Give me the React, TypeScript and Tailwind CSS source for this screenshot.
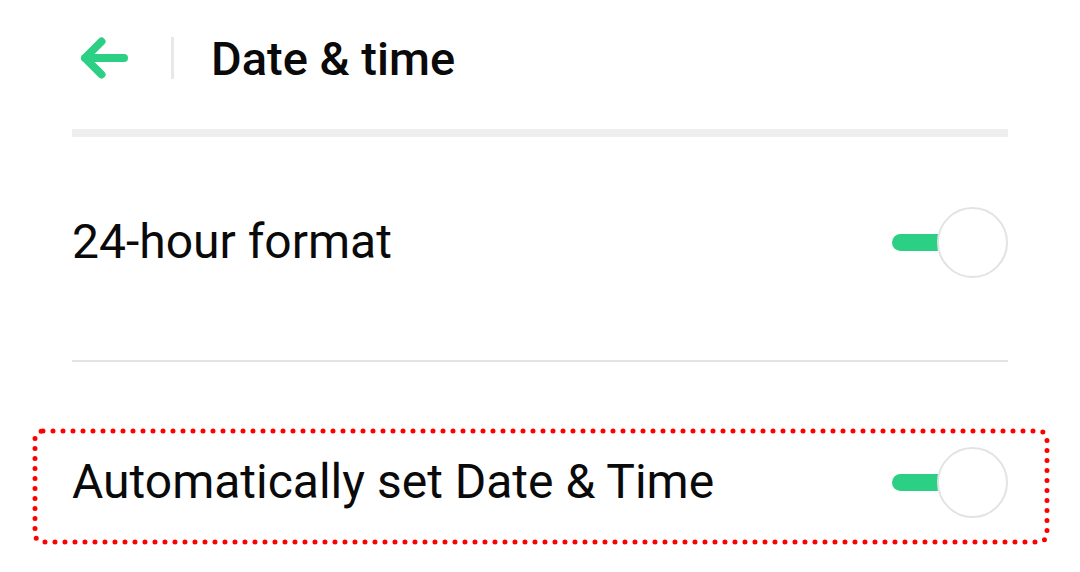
import React from "react";

function BackArrow() {
  return (
    <svg width="48" height="42" viewBox="0 0 48 42" fill="none">
      <path
        d="M5 21H44M5 21L21.5 4.5M5 21L21.5 37.5"
        stroke="#2cd085"
        strokeWidth="8"
        strokeLinecap="round"
        strokeLinejoin="round"
      />
    </svg>
  );
}

function Toggle() {
  return (
    <div className="relative w-[116px] h-[71px] shrink-0">
      <div className="absolute left-0 top-[27px] w-[70px] h-[17px] rounded-full bg-[#2cd085]" />
      <div className="absolute right-0 top-0 w-[71px] h-[71px] rounded-full bg-white border-[2px] border-[#e3e3e3]" />
    </div>
  );
}

// red dotted highlight drawn over the second row
function DottedFrame() {
  return (
    <svg
      className="absolute left-[-40px] top-[66px] pointer-events-none"
      width="1018"
      height="117"
      viewBox="0 0 1018 117"
      fill="none"
    >
      <rect
        x="3"
        y="3"
        width="1012"
        height="111"
        rx="8"
        stroke="#ff0000"
        strokeWidth="5"
        strokeLinecap="round"
        strokeDasharray="0 10"
      />
    </svg>
  );
}

export default function App() {
  return (
    <div
      className="w-[1080px] h-[572px] bg-white text-[#0a0a0a] overflow-hidden"
      style={{ fontFamily: "Roboto, 'Noto Sans', sans-serif" }}
    >
      <header className="flex items-center h-[116px] pl-[80px]">
        <BackArrow />
        <div className="ml-[43px] w-[3px] h-[42px] bg-[#e8e8e8]" />
        <h1 className="ml-[37px] text-[47px] font-medium leading-none">Date &amp; time</h1>
      </header>

      <div className="mx-[72px] mt-[13px] h-[8px] bg-[#eeeeee]" />

      <div className="mx-[72px]">
        <div className="flex items-center justify-between h-[210px]">
          <span className="text-[48px] leading-none">24-hour format</span>
          <Toggle />
        </div>

        <div className="mt-[13px] h-[2px] bg-[#e3e3e3]" />

        <div className="relative flex items-center justify-between h-[240px]">
          <span className="text-[48px] leading-none">Automatically set Date &amp; Time</span>
          <Toggle />
          <DottedFrame />
        </div>
      </div>
    </div>
  );
}
